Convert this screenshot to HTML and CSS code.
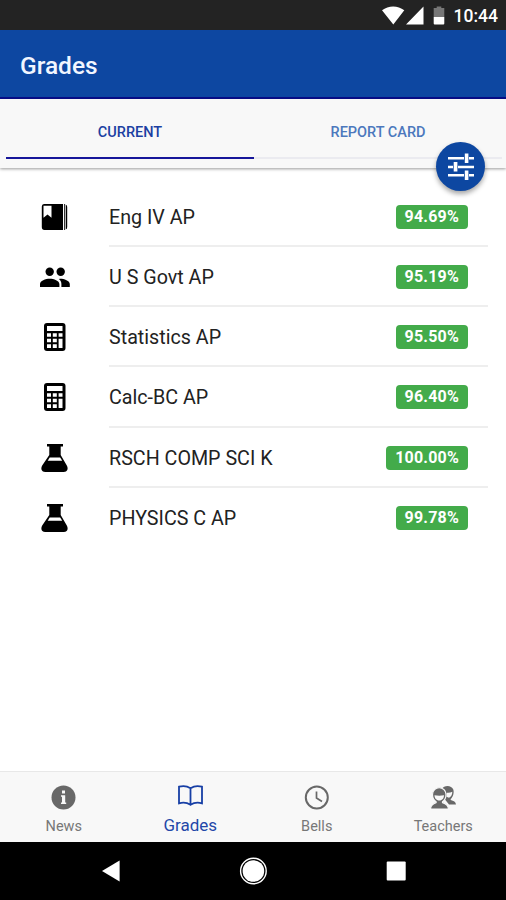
FILE: index.html
```
<!DOCTYPE html>
<html lang="en">
<head>
    <meta charset="UTF-8">
    <title>Grades</title>
    <link rel="stylesheet" href="styles.css">
</head>
<body>
    <!-- Shared icons -->
    <svg class="icon-defs">
        <symbol id="calculator" viewBox="0 0 32 32">
            <rect x="5" y="2" width="21.5" height="28" rx="3" fill="#000"/>
            <path fill="#fff" d="M8 5h15.500v5H8z M8 12.300h4v3.500H8z M13.800 12.300h4v3.500h-4z M19.600 12.300h3.900v3.500h-3.900z M8 17.800h4v3.500H8z M13.800 17.800h4v3.500h-4z M19.600 17.800h3.900v9.200h-3.900z M8 23.300h4v3.700H8z M13.800 23.300h4v3.700h-4z"/>
        </symbol>
        <symbol id="flask" viewBox="0 0 32 32">
            <path d="M8 2h16v2.600h-2.300v8.400l6.100 10.500c1.900 3.500.4 6.500-3 6.500H6.200c-3.400 0-4.900-3-3-6.500L10.300 13V4.600H8z"/>
            <path fill="#fff" d="M10.700 15.400h10.500l2 3.400H8.700z"/>
        </symbol>
    </svg>

    <div class="status-bar">
        <svg class="status-icons" width="66" height="20" viewBox="0 0 66 20">
            <path fill="#fff" d="M0 4.300C6.500-.9 15.800-.9 22.300 4.300L11.300 18.500z M41.500.500v18H24z"/>
            <path fill="#777" d="M51.700 2h3V.500h4.600V2h3v9H51.700z"/>
            <path fill="#fff" d="M51.700 11h10.600v6.500q0 1-1 1h-8.600q-1 0-1-1z"/>
        </svg>
        <span class="time">10:44</span>
    </div>

    <header>
        <h1>Grades</h1>
    </header>

    <div class="tabs">
        <div class="tab active">CURRENT</div>
        <div class="tab">REPORT CARD</div>
        <button class="filter-btn">
            <svg width="28" height="28" viewBox="0 0 28 28" fill="#fff">
                <path d="M1 4h16v2.500H1z M22 4h5v2.500h-5z M17.800.500h3.600v9.500h-3.600z M1 12.700h5v2.500H1z M11 12.700h16v2.500H11z M6.700 9h3.700v9.500H6.700z M1 21h16v2.500H1z M22 21h5v2.500h-5z M17.800 17.500h3.600v9.500h-3.600z"/>
            </svg>
        </button>
    </div>

    <main>
        <div class="course">
            <svg class="course-icon" viewBox="0 0 32 32">
                <path d="M4.500 3H24V29H5.500Q2.800 29 2.800 26V5.500Q2.800 3 5 3z M25.200 3h.8v26h-.8z M26.700 3.500q1.500.5 1.500 2.500v20q0 2-1.500 2.500z"/>
                <path fill="#fff" d="M4.500 4.800h8v12l-4-3.200-4 3.200z"/>
            </svg>
            <div class="course-body"><span class="course-name">Eng IV AP</span><span class="grade">94.69%</span></div>
        </div>
        <div class="course">
            <svg class="course-icon" viewBox="0 0 32 32">
                <circle cx="10.700" cy="10.700" r="4.200"/>
                <circle cx="21.700" cy="10.700" r="4.200"/>
                <path d="M1 26.100v-3c0-3.400 5.600-5.400 9.700-5.400s9.700 2 9.700 5.400v3z M21 17.700c4.200 0 9.800 2 9.800 5.400v3h-8.400v-3c0-2.300-.8-3.900-2.600-5.200z"/>
            </svg>
            <div class="course-body"><span class="course-name">U S Govt AP</span><span class="grade">95.19%</span></div>
        </div>
        <div class="course">
            <svg class="course-icon"><use href="#calculator"/></svg>
            <div class="course-body"><span class="course-name">Statistics AP</span><span class="grade">95.50%</span></div>
        </div>
        <div class="course">
            <svg class="course-icon"><use href="#calculator"/></svg>
            <div class="course-body"><span class="course-name">Calc-BC AP</span><span class="grade">96.40%</span></div>
        </div>
        <div class="course">
            <svg class="course-icon"><use href="#flask"/></svg>
            <div class="course-body"><span class="course-name">RSCH COMP SCI K</span><span class="grade">100.00%</span></div>
        </div>
        <div class="course">
            <svg class="course-icon"><use href="#flask"/></svg>
            <div class="course-body"><span class="course-name">PHYSICS C AP</span><span class="grade">99.78%</span></div>
        </div>
    </main>

    <!-- Bottom menu -->
    <nav class="menu">
        <a class="menu-item">
            <svg width="26" height="26" viewBox="0 0 26 26">
                <circle cx="13.500" cy="13.500" r="12" fill="#686868"/>
                <path fill="#f8f8f8" d="M12 6.500h3v3h-3z M11 11.200h4.200v7.200h1v1.600H11v-1.600h1v-5.600h-1z"/>
            </svg>
            <span>News</span>
        </a>
        <a class="menu-item selected">
            <svg width="26" height="26" viewBox="0 0 26 26" fill="none" stroke="#173fa5" stroke-width="1.800">
                <path d="M13.500 5.200C10 2.900 5.500 2.700 2 3.700v16.600c3.500-1 8-.8 11.500 1.500 3.500-2.300 8-2.500 11.500-1.500V3.700c-3.500-1-8-.8-11.500 1.500zV21.800"/>
            </svg>
            <span>Grades</span>
        </a>
        <a class="menu-item">
            <svg width="26" height="26" viewBox="0 0 26 26" fill="none" stroke="#686868">
                <circle cx="13.800" cy="13.500" r="11" stroke-width="2"/>
                <path d="M13.500 7.500V14l5.500 3.500" stroke-width="1.700"/>
            </svg>
            <span>Bells</span>
        </a>
        <a class="menu-item">
            <svg width="26" height="26" viewBox="0 0 26 26" fill="#686868">
                <path d="M12 5C13.500 1 21.500.5 23.300 5.500c1 3-.2 7.500-2.600 9.500v1c3 .8 5 2 5.300 4.500h-7l-4-5z"/>
                <path fill="#f8f8f8" d="M16.500 8.700c2.200.3 4.100 0 5.800-1 0 2.800-1.100 5-3.300 6l-2.500-1z"/>
                <path stroke="#f8f8f8" stroke-width="1.200" d="M2.500 10.500c0-9 13.500-9 13.500 0 0 2.800-1 5.500-3.500 7.300v.8c3 .9 5.800 2.500 6 6.400H.5c.2-3.900 2.500-5.500 5.600-6.400v-.8c-2.500-1.800-3.600-4.500-3.600-7.300z"/>
                <path fill="#f8f8f8" d="M4.500 11.200c3 .6 6.500.6 9.500 0 0 2.800-1.700 5.300-4.700 5.300s-4.800-2.500-4.800-5.300z"/>
            </svg>
            <span>Teachers</span>
        </a>
    </nav>

    <footer>
        <svg width="20" height="22" viewBox="0 0 20 22"><path fill="#fff" d="M2 11 19.600.5v21z"/></svg>
        <svg width="28" height="28" viewBox="0 0 28 28">
            <circle cx="14.400" cy="14" r="12.800" fill="none" stroke="#fff" stroke-width="1.400"/>
            <circle cx="14.400" cy="14" r="10.800" fill="#fff"/>
        </svg>
        <svg width="20" height="20" viewBox="0 0 20 20"><rect x=".7" y=".5" width="19" height="19" rx="1" fill="#fff"/></svg>
    </footer>
</body>
</html>
```
FILE: styles.css
```
* {
    box-sizing: border-box;
}

body {
    margin: 0;
    height: 900px;
    display: flex;
    flex-direction: column;
    background-color: #fff;
    font-family: Roboto, sans-serif;
    overflow: hidden;
}

svg {
    display: block;
    flex-shrink: 0;
}

.icon-defs {
    display: none;
}

.status-bar {
    height: 30px;
    flex-shrink: 0;
    display: flex;
    align-items: center;
    justify-content: flex-end;
    gap: 6px;
    padding: 2px 8px 0 0;
    background-color: #232323;
    color: #fff;
}

.time {
    font-size: 17.5px;
    font-weight: 500;
    line-height: 28px;
}

header {
    height: 69px;
    flex-shrink: 0;
    padding-left: 20px;
    display: flex;
    align-items: center;
    background-color: #0d47a1;
    border-bottom: 2px solid #080d8b;
}

header h1 {
    margin: 3px 0 0;
    font-size: 24.5px;
    font-weight: 500;
    color: #f2f6ff;
}

.tabs {
    position: relative;
    height: 69px;
    flex-shrink: 0;
    display: flex;
    padding: 0 4px 9px 6px;
    background-color: #f8f8f8;
    box-shadow: 0 1px 3px rgba(0, 0, 0, 0.4);
}

.tab {
    flex: 1;
    display: flex;
    align-items: center;
    justify-content: center;
    padding-top: 8px;
    font-size: 14.5px;
    font-weight: 500;
    color: #4c78bd;
    border-bottom: 2px solid #ebebf0;
}

.tab.active {
    color: #1c3fa2;
    border-bottom-color: #16169a;
}

/* Round button sits over the edge of the tabs */
.filter-btn {
    position: absolute;
    right: 21px;
    top: 43px;
    width: 49px;
    height: 49px;
    padding: 0;
    display: flex;
    align-items: center;
    justify-content: center;
    border: none;
    border-radius: 50%;
    background-color: #0d47a1;
    box-shadow: 0 3px 5px rgba(0, 0, 0, 0.35);
}

main {
    flex: 1;
    padding-top: 18.4px;
}

.course {
    height: 60.3px;
    display: flex;
    align-items: center;
    padding: 0 18px 0 39px;
}

.course-icon {
    width: 32px;
    height: 32px;
    margin-right: 38px;
}

.course-body {
    flex: 1;
    height: 100%;
    display: flex;
    align-items: center;
    justify-content: space-between;
    padding-right: 20px;
    border-bottom: 2px solid #eee;
}

.course:last-child .course-body {
    border-bottom-color: transparent;
}

.course-name {
    font-size: 19.7px;
    color: #222;
    padding-top: 3px;
}

.grade {
    height: 24px;
    margin-top: 2px;
    padding: 0 9px;
    border-radius: 4px;
    background-color: #43ab4a;
    color: #fff;
    font-size: 16px;
    font-weight: 700;
    letter-spacing: 0.2px;
    line-height: 24px;
}

.menu {
    height: 71px;
    flex-shrink: 0;
    display: flex;
    background-color: #f8f8f8;
    border-top: 1px solid #e8e8e8;
}

.menu-item {
    flex: 1;
    display: flex;
    flex-direction: column;
    align-items: center;
    gap: 8px;
    padding-top: 12px;
    font-size: 14.5px;
    line-height: 17px;
    color: #777;
}

.menu-item span {
    padding-left: 1px;
}

.menu-item.selected {
    padding-top: 11px;
    font-size: 17px;
    color: #2347a8;
}

footer {
    height: 58px;
    flex-shrink: 0;
    display: flex;
    align-items: center;
    justify-content: center;
    gap: 119px;
    background-color: #000;
}
```
